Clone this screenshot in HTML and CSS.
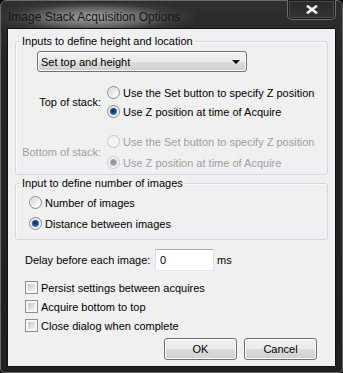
FILE: index.html
```html
<!DOCTYPE html>
<html lang="en">
<head>
    <meta charset="UTF-8">
    <title>Image Stack Acquisition Options</title>
    <link rel="stylesheet" href="styles.css">
</head>
<body>
    <div class="window">
        <div class="titlebar">
            <span class="title">Image Stack Acquisition Options</span>
            <button type="button" class="close" title="Close">
                <svg width="12" height="9" viewBox="0 0 12 9">
                    <path d="M2 1.5 L10 7.5 M10 1.5 L2 7.5" stroke="#f2f2f2" stroke-width="2.6" stroke-linecap="square"/>
                </svg>
            </button>
        </div>

        <form class="dialog">
            <fieldset class="group">
                <legend>Inputs to define height and location</legend>
                <div class="combo">
                    <span>Set top and height</span>
                    <span class="arrow"></span>
                </div>

                <div class="stack-row">
                    <span class="stack-label">Top of stack:</span>
                    <div class="options">
                        <label class="radio"><span class="dot"></span>Use the Set button to specify Z position</label>
                        <label class="radio"><span class="dot checked"></span>Use Z position at time of Acquire</label>
                    </div>
                </div>

                <div class="stack-row disabled">
                    <span class="stack-label">Bottom of stack:</span>
                    <div class="options">
                        <label class="radio"><span class="dot"></span>Use the Set button to specify Z position</label>
                        <label class="radio"><span class="dot checked"></span>Use Z position at time of Acquire</label>
                    </div>
                </div>
            </fieldset>

            <fieldset class="group group-count">
                <legend>Input to define number of images</legend>
                <label class="radio"><span class="dot"></span>Number of images</label>
                <label class="radio"><span class="dot checked"></span>Distance between images</label>
            </fieldset>

            <div class="delay-row">
                <span class="delay-label">Delay before each image:</span>
                <span class="textbox">0</span>
                <span class="unit">ms</span>
            </div>

            <div class="checks">
                <label class="check"><span class="box"></span>Persist settings between acquires</label>
                <label class="check"><span class="box"></span>Acquire bottom to top</label>
                <label class="check"><span class="box"></span>Close dialog when complete</label>
            </div>

            <div class="buttons">
                <button type="button" class="btn">OK</button>
                <button type="button" class="btn">Cancel</button>
            </div>
        </form>
    </div>
</body>
</html>
```

FILE: styles.css
```css
body {
    margin: 0;
    background-color: #000;
    font-family: "Liberation Sans", Arial, sans-serif;
    font-size: 11px;
    color: #000;
}

.window {
    width: 343px;
    height: 373px;
    box-sizing: border-box;
    border: 1px solid #6a6a6a;
    border-radius: 6px 6px 4px 4px;
    background: linear-gradient(#2f2f2f, #252525 60px, #1f1f1f);
    padding: 0 6px 5px;
    display: flex;
    flex-direction: column;
}

/* title bar */
.titlebar {
    height: 27px;
    display: flex;
    align-items: flex-start;
}

.title {
    margin: 2px 0 0 -6px;
    padding: 7px 14px 8px 7px;
    font-size: 12px;
    line-height: 14px;
    color: #151515;
    background: radial-gradient(ellipse 55% 62% at 48% 50%, rgba(175, 175, 175, 0.9), rgba(150, 150, 150, 0.6) 45%, rgba(100, 100, 100, 0.25) 75%, rgba(60, 60, 60, 0) 100%);
}

.close {
    margin: -1px 0 0 auto;
    width: 49px;
    height: 20px;
    padding: 0;
    border: 1px solid #6e6e6e;
    border-top: none;
    border-radius: 0 0 5px 5px;
    background: linear-gradient(#2a2a2a, #333);
    box-shadow: inset 0 0 0 1px #1a1a1a, inset 0 0 0 2px #4a4a4a;
    display: flex;
    align-items: center;
    justify-content: center;
}

/* dialog body */
.dialog {
    flex: 1;
    margin: 0;
    border: 1px solid #111;
    background-color: #f0f0f0;
    display: flex;
    flex-direction: column;
}

.group {
    margin: 6px 7px 0;
    padding: 0 0 2px;
    min-width: 0;
    border: 1px solid #d3d9de;
    border-radius: 3px;
    box-shadow: inset 1px 1px 0 #fafafa;
}

.group legend {
    margin-left: 4px;
    padding: 0 2px;
    line-height: 13px;
}

.group-count {
    margin-top: 2px;
    padding-bottom: 5px;
}

.group-count .radio {
    height: 21px;
    margin-left: 13px;
}

.group-count legend + .radio {
    margin-top: 2px;
}

.combo {
    margin: 3px 0 0 21px;
    width: 210px;
    height: 21px;
    box-sizing: border-box;
    padding: 0 6px 0 3px;
    border: 1px solid #707070;
    border-radius: 3px;
    background: linear-gradient(#f2f2f2, #ebebeb 50%, #dddddd 50%, #cfcfcf);
    box-shadow: inset 0 0 0 1px #fbfbfb;
    display: flex;
    align-items: center;
}

.arrow {
    margin-left: auto;
    border-left: 4px solid transparent;
    border-right: 4px solid transparent;
    border-top: 4px solid #000;
}

.stack-row {
    margin-top: 11px;
    display: grid;
    grid-template-columns: 85px auto;
    column-gap: 6px;
    align-items: center;
}

.stack-label {
    text-align: right;
}

.disabled {
    color: #a0a0a0;
}

.disabled .radio + .radio {
    margin-top: 2px;
}

.options {
    display: flex;
    flex-direction: column;
}

.radio,
.check {
    height: 19px;
    display: flex;
    align-items: center;
    gap: 3px;
}

.dot {
    width: 13px;
    height: 13px;
    box-sizing: border-box;
    border-radius: 50%;
    border: 1px solid #8a8a8a;
    background: linear-gradient(135deg, #cdcdcd, #f8f8f8 70%, #fff);
    box-shadow: inset 0 0 0 1px #f2f2f2;
    display: flex;
    align-items: center;
    justify-content: center;
}

.dot.checked::after {
    content: "";
    width: 7px;
    height: 7px;
    border-radius: 50%;
    background: radial-gradient(circle at 45% 40%, #0b2a55, #1e5fa8 55%, #8fc4ef);
}

.disabled .dot {
    border-color: #c8c8c8;
    background: #f4f4f4;
}

.disabled .dot.checked::after {
    background: radial-gradient(circle at 45% 40%, #8c8c8c, #a8a8a8 55%, #d8d8d8);
}

/* delay input */
.delay-row {
    margin: 9px 0 0 17px;
    height: 22px;
    display: flex;
    align-items: center;
}

.delay-label {
    width: 130px;
}

.textbox {
    width: 59px;
    height: 22px;
    box-sizing: border-box;
    padding-left: 4px;
    border: 1px solid #e2e3ea;
    border-top-color: #abadb3;
    border-bottom-color: #e3e9ef;
    background-color: #fff;
    display: flex;
    align-items: center;
}

.unit {
    margin-left: 3px;
}

/* checkboxes */
.checks {
    margin: 7px 0 0 17px;
    display: flex;
    flex-direction: column;
}

.box {
    width: 13px;
    height: 13px;
    box-sizing: border-box;
    border: 1px solid #8e8f8f;
    padding: 2px;
    background: linear-gradient(135deg, #c6c6c6, #f4f4f4) content-box, #f6f6f6 padding-box;
}

/* buttons */
.buttons {
    margin-top: 3px;
    padding-right: 18px;
    display: flex;
    justify-content: flex-end;
    gap: 7px;
}

.btn {
    width: 73px;
    height: 22px;
    padding: 0;
    font-family: inherit;
    font-size: 11px;
    color: #000;
    border: 1px solid #707070;
    border-radius: 3px;
    background: linear-gradient(#f2f2f2, #ebebeb 50%, #dddddd 50%, #cfcfcf);
    box-shadow: inset 0 0 0 1px #fcfcfc;
}
```
